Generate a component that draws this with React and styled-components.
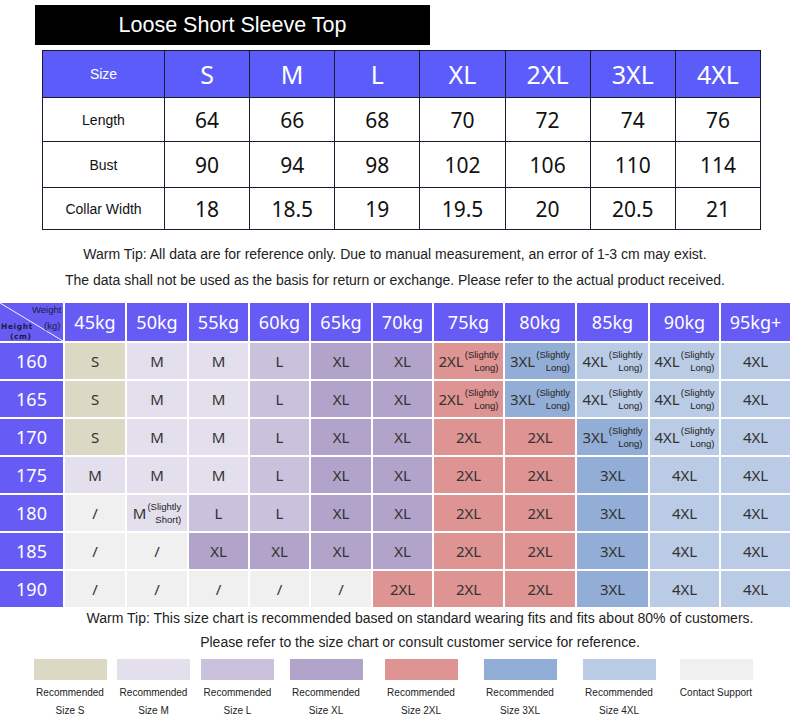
import React from "react";
import styled, { createGlobalStyle } from "styled-components";

const measures = [
  { label: "Length", values: ["64", "66", "68", "70", "72", "74", "76"], h: 43 },
  { label: "Bust", values: ["90", "94", "98", "102", "106", "110", "114"], h: 45 },
  { label: "Collar Width", values: ["18", "18.5", "19", "19.5", "20", "20.5", "21"], h: 41 },
];

const sizes = ["S", "M", "L", "XL", "2XL", "3XL", "4XL"];

const weights = ["45kg", "50kg", "55kg", "60kg", "65kg", "70kg", "75kg", "80kg", "85kg", "90kg", "95kg+"];

const colors = {
  S: "#dbd9c4",
  M: "#e3dfed",
  L: "#cac2dd",
  XL: "#b1a3c9",
  "2XL": "#df9494",
  "3XL": "#92aed6",
  "4XL": "#bacbe5",
  "/": "#f0f0f0",
};

// "+" after a size means slightly long, "-" slightly short
const chart = [
  { height: "160", fits: ["S", "M", "M", "L", "XL", "XL", "2XL+", "3XL+", "4XL+", "4XL+", "4XL"] },
  { height: "165", fits: ["S", "M", "M", "L", "XL", "XL", "2XL+", "3XL+", "4XL+", "4XL+", "4XL"] },
  { height: "170", fits: ["S", "M", "M", "L", "XL", "XL", "2XL", "2XL", "3XL+", "4XL+", "4XL"] },
  { height: "175", fits: ["M", "M", "M", "L", "XL", "XL", "2XL", "2XL", "3XL", "4XL", "4XL"] },
  { height: "180", fits: ["/", "M-", "L", "L", "XL", "XL", "2XL", "2XL", "3XL", "4XL", "4XL"] },
  { height: "185", fits: ["/", "/", "XL", "XL", "XL", "XL", "2XL", "2XL", "3XL", "4XL", "4XL"] },
  { height: "190", fits: ["/", "/", "/", "/", "/", "2XL", "2XL", "2XL", "3XL", "4XL", "4XL"] },
];

const legend = [
  { color: colors.S, lines: ["Recommended", "Size S"] },
  { color: colors.M, lines: ["Recommended", "Size M"] },
  { color: colors.L, lines: ["Recommended", "Size L"] },
  { color: colors.XL, lines: ["Recommended", "Size XL"] },
  { color: colors["2XL"], lines: ["Recommended", "Size 2XL"] },
  { color: colors["3XL"], lines: ["Recommended", "Size 3XL"] },
  { color: colors["4XL"], lines: ["Recommended", "Size 4XL"] },
  { color: colors["/"], lines: ["Contact Support"] },
];

const GlobalStyle = createGlobalStyle`
  body {
    margin: 0;
    background: #ffffff;
    font-family: "Liberation Sans", Arial, sans-serif;
  }
`;

const Page = styled.div`
  width: 790px;
  height: 719px;
  padding-top: 5px;
  box-sizing: border-box;
  overflow: hidden;
`;

const TitleBar = styled.div`
  width: 395px;
  height: 40px;
  margin-left: 35px;
  background: #000;
  color: #fff;
  font-size: 21.5px;
  display: flex;
  align-items: center;
  justify-content: center;
`;

const SizeTable = styled.table`
  margin: 5px 0 0 42px;
  width: 719px;
  border-collapse: collapse;
  table-layout: fixed;
`;

const HeadCell = styled.th`
  height: 46px;
  padding: 0;
  background: #5c5cfa;
  color: #fff;
  border: 1px solid #1a1a2e;
  font-family: ${(p) => (p.$label ? '"Liberation Sans", Arial' : '"Noto Sans"')}, sans-serif;
  font-size: ${(p) => (p.$label ? "14px" : "25px")};
  font-weight: normal;
`;

const BodyCell = styled.td`
  height: ${(p) => p.$h}px;
  padding: 0;
  border: 1px solid #1a1a2e;
  text-align: center;
  color: #111;
  font-family: ${(p) => (p.$label ? '"Liberation Sans", Arial' : '"Noto Sans"')}, sans-serif;
  font-size: ${(p) => (p.$label ? "14px" : "21px")};
`;

const Tips = styled.div`
  display: flex;
  flex-direction: column;
  align-items: center;
  gap: ${(p) => p.$gap}px;
  margin-top: ${(p) => p.$top}px;
  padding-left: ${(p) => p.$shift}px;
  font-size: 14px;
  color: #222;
  line-height: 16px;
`;

const FitGrid = styled.div`
  margin-top: 15px;
  display: grid;
  grid-template-columns: 63px 60px 60px 59px 59px 60px 59px 69px 70px 71px 69px 69px;
  grid-template-rows: 38px;
  grid-auto-rows: 36px;
  gap: 2px;
  background: #fff;
`;

const Corner = styled.div`
  position: relative;
  background: #675bf6;
  color: #1c1c3a;
  overflow: hidden;
`;

const CornerLine = styled.svg`
  position: absolute;
  inset: 0;
`;

const CornerText = styled.span`
  position: absolute;
  font-family: ${(p) => (p.$wide ? '"DejaVu Sans"' : '"Liberation Sans", Arial')}, sans-serif;
  font-size: ${(p) => (p.$wide ? "7.5px" : "9.5px")};
  font-weight: ${(p) => (p.$wide ? "bold" : "normal")};
  letter-spacing: ${(p) => (p.$wide ? "0.6px" : "0")};
  top: ${(p) => p.$y}px;
  left: ${(p) => p.$x}px;
`;

const BlueCell = styled.div`
  background: #675bf6;
  color: #fff;
  font-family: "Noto Sans", sans-serif;
  font-size: 18px;
  display: flex;
  align-items: center;
  justify-content: center;
`;

const FitCell = styled.div`
  background: ${(p) => p.$bg};
  color: #333;
  font-family: "Noto Sans", sans-serif;
  font-size: 15px;
  display: flex;
  align-items: center;
  justify-content: center;
`;

const Note = styled.span`
  display: flex;
  flex-direction: column;
  align-items: flex-end;
  margin-left: 1px;
  font-family: "Liberation Sans", Arial, sans-serif;
  font-size: 9.5px;
  line-height: 13px;
  color: #222;
`;

const Legend = styled.div`
  margin: 9px 0 0 28px;
  display: grid;
  grid-template-columns: 84px 83px 85px 92px 98px 100px 98px 96px;
`;

const LegendItem = styled.div`
  display: flex;
  flex-direction: column;
  align-items: center;
`;

const Swatch = styled.div`
  width: 73px;
  height: 21px;
  background: ${(p) => p.$bg};
  margin-bottom: 4px;
`;

const LegendText = styled.div`
  font-size: 10px;
  line-height: 18px;
  color: #222;
  text-align: center;
`;

const Fit = ({ value }) => {
  const mark = value.slice(-1);
  if (mark !== "+" && mark !== "-") {
    return <FitCell $bg={colors[value]}>{value}</FitCell>;
  }
  const size = value.slice(0, -1);
  return (
    <FitCell $bg={colors[size]}>
      {size}
      <Note>
        <span>(Slightly</span>
        <span>{mark === "+" ? "Long)" : "Short)"}</span>
      </Note>
    </FitCell>
  );
};

const App = () => {
  return (
    <Page>
      <GlobalStyle />
      <TitleBar>Loose Short Sleeve Top</TitleBar>
      <SizeTable>
        <colgroup>
          <col style={{ width: 122 }} />
          {sizes.map((s) => (
            <col key={s} />
          ))}
        </colgroup>
        <thead>
          <tr>
            <HeadCell $label>Size</HeadCell>
            {sizes.map((s) => (
              <HeadCell key={s}>{s}</HeadCell>
            ))}
          </tr>
        </thead>
        <tbody>
          {measures.map((m) => (
            <tr key={m.label}>
              <BodyCell $label $h={m.h}>
                {m.label}
              </BodyCell>
              {m.values.map((v, i) => (
                <BodyCell key={i} $h={m.h}>
                  {v}
                </BodyCell>
              ))}
            </tr>
          ))}
        </tbody>
      </SizeTable>

      <Tips $top={16} $gap={10} $shift={0}>
        <span>Warm Tip: All data are for reference only. Due to manual measurement, an error of 1-3 cm may exist.</span>
        <span>The data shall not be used as the basis for return or exchange. Please refer to the actual product received.</span>
      </Tips>

      <FitGrid>
        <Corner>
          <CornerLine width="63" height="38">
            <line x1="0" y1="0" x2="63" y2="38" stroke="#f4f4ff" strokeWidth="1" />
          </CornerLine>
          <CornerText $x={32} $y={1}>Weight</CornerText>
          <CornerText $x={44} $y={17}>(kg)</CornerText>
          <CornerText $wide $x={1} $y={19}>Height</CornerText>
          <CornerText $wide $x={10} $y={29}>(cm)</CornerText>
        </Corner>
        {weights.map((w) => (
          <BlueCell key={w}>{w}</BlueCell>
        ))}
        {chart.map((row) => (
          <React.Fragment key={row.height}>
            <BlueCell>{row.height}</BlueCell>
            {row.fits.map((f, i) => (
              <Fit key={i} value={f} />
            ))}
          </React.Fragment>
        ))}
      </FitGrid>

      <Tips $top={3} $gap={8} $shift={50}>
        <span>Warm Tip: This size chart is recommended based on standard wearing fits and fits about 80% of customers.</span>
        <span>Please refer to the size chart or consult customer service for reference.</span>
      </Tips>

      <Legend>
        {legend.map((item, i) => (
          <LegendItem key={i}>
            <Swatch $bg={item.color} />
            {item.lines.map((line) => (
              <LegendText key={line}>{line}</LegendText>
            ))}
          </LegendItem>
        ))}
      </Legend>
    </Page>
  );
};

export default App;
